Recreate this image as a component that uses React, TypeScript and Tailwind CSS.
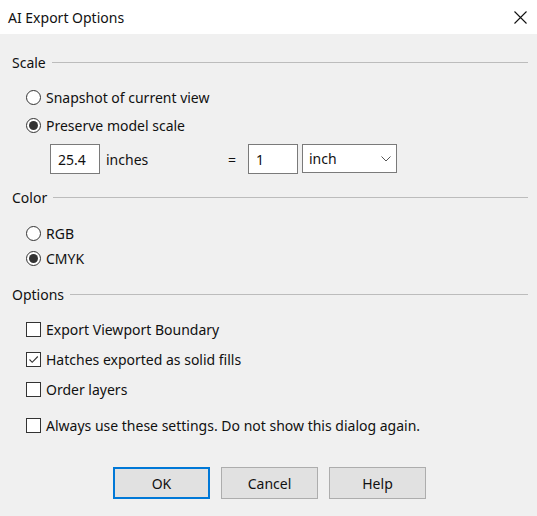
import React from 'react';

function Radio({ checked, label }: { checked?: boolean; label: string }) {
  return (
    <div className="flex items-center h-full pl-[14px]">
      <span className="w-[15px] h-[15px] rounded-full border border-[#333] bg-white flex items-center justify-center shrink-0">
        {checked && <span className="w-[9px] h-[9px] rounded-full bg-[#333]" />}
      </span>
      <span className="ml-[5px]">{label}</span>
    </div>
  );
}

function Check({ checked, label }: { checked?: boolean; label: string }) {
  return (
    <div className="flex items-center h-full pl-[14px]">
      <span className="w-[15px] h-[15px] border border-[#333] bg-white flex items-center justify-center shrink-0">
        {checked && (
          <svg width="11" height="11" viewBox="0 0 11 11">
            <path d="M1.5 5.5 L4.2 8.3 L9.8 2.5" fill="none" stroke="#333" strokeWidth="1.1" />
          </svg>
        )}
      </span>
      <span className="ml-[5px]">{label}</span>
    </div>
  );
}

function Header({ title }: { title: string }) {
  return (
    <div className="flex items-center h-[20px] pr-[9px]">
      <span>{title}</span>
      <div className="flex-1 h-px bg-[#bcbcbc] ml-[6px]" />
    </div>
  );
}

export default function App() {
  return (
    <div
      className="w-[537px] h-[516px] bg-[#f0f0f0] flex flex-col text-[14px] text-[#111] overflow-hidden"
      style={{ fontFamily: '"Noto Sans", "Segoe UI", sans-serif' }}
    >
      {/* title bar */}
      <div className="h-[34px] bg-white flex items-center justify-between pl-[8px] pr-[10px] shrink-0">
        <span className="text-[14px]">AI Export Options</span>
        <svg width="13" height="13" viewBox="0 0 13 13">
          <path d="M0.5 0.5 L12.5 12.5 M12.5 0.5 L0.5 12.5" stroke="#111" strokeWidth="1.1" />
        </svg>
      </div>

      <div className="flex flex-col pl-[12px] pt-[18px]">
        <Header title="Scale" />
        <div className="mt-[11px] h-[28px]">
          <Radio label="Snapshot of current view" />
        </div>
        <div className="h-[28px]">
          <Radio checked label="Preserve model scale" />
        </div>
        <div className="mt-[5px] flex items-center pl-[38px]">
          <div className="w-[50px] h-[30px] bg-white border border-[#7a7a7a] flex items-center pl-[7px]">25.4</div>
          <span className="ml-[6px] w-[122px]">inches</span>
          <span className="w-[20px]">=</span>
          <div className="w-[50px] h-[30px] bg-white border border-[#7a7a7a] flex items-center pl-[7px]">1</div>
          <div className="ml-[4px] w-[95px] h-[29px] -mt-[1px] bg-white border border-[#7a7a7a] flex items-center justify-between pl-[6px] pr-[5px]">
            <span>inch</span>
            <svg width="10" height="6" viewBox="0 0 10 6">
              <path d="M0.5 0.5 L5 5 L9.5 0.5" fill="none" stroke="#555" strokeWidth="1" />
            </svg>
          </div>
        </div>

        <div className="mt-[13px]">
          <Header title="Color" />
        </div>
        <div className="mt-[14px] h-[25px]">
          <Radio label="RGB" />
        </div>
        <div className="h-[25px]">
          <Radio checked label="CMYK" />
        </div>

        <div className="mt-[13px]">
          <Header title="Options" />
        </div>
        <div className="mt-[10px] h-[30px]">
          <Check label="Export Viewport Boundary" />
        </div>
        <div className="h-[30px]">
          <Check checked label="Hatches exported as solid fills" />
        </div>
        <div className="h-[30px]">
          <Check label="Order layers" />
        </div>
        <div className="mt-[6px] h-[30px]">
          <Check label="Always use these settings. Do not show this dialog again." />
        </div>

        <div className="mt-[27px] flex gap-[11px] pl-[101px]">
          <button className="w-[97px] h-[32px] bg-[#e1e1e1] border-2 border-[#0078d7]">OK</button>
          <button className="w-[97px] h-[32px] bg-[#e1e1e1] border border-[#adadad]">Cancel</button>
          <button className="w-[97px] h-[32px] bg-[#e1e1e1] border border-[#adadad]">Help</button>
        </div>
      </div>
    </div>
  );
}
